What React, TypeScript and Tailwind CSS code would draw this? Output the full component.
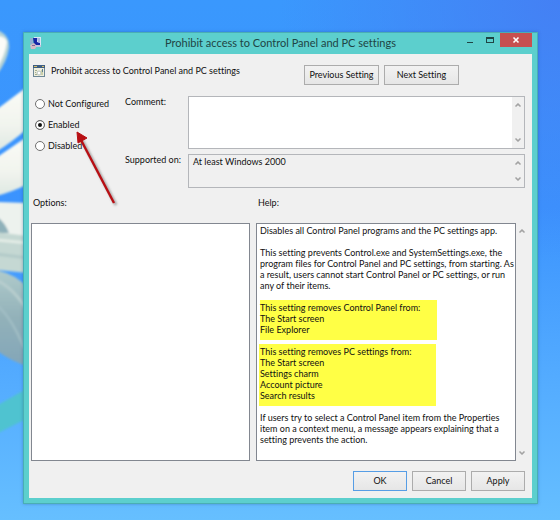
import React, { useState } from "react";
import { ChevronDown, ChevronUp } from "lucide-react";

const STATES = ["Not Configured", "Enabled", "Disabled"];

function Wallpaper() {
    return (
        <svg
            className="absolute inset-0 h-full w-full"
            viewBox="0 0 560 520"
            preserveAspectRatio="none"
            aria-hidden="true"
        >
            <defs>
                <linearGradient id="sky" x1="0" y1="0" x2="0" y2="1">
                    <stop offset="0" stopColor="#3a98fd" />
                    <stop offset="0.4" stopColor="#3b93fe" />
                    <stop offset="0.75" stopColor="#55adff" />
                    <stop offset="1" stopColor="#66bfff" />
                </linearGradient>
                <radialGradient id="corner" cx="1" cy="0" r="0.5">
                    <stop offset="0" stopColor="#4480f4" />
                    <stop offset="1" stopColor="#4480f4" stopOpacity="0" />
                </radialGradient>
                <linearGradient id="petal" x1="0" y1="0" x2="0" y2="1">
                    <stop offset="0" stopColor="#fbfcf7" />
                    <stop offset="0.6" stopColor="#f1f4ee" />
                    <stop offset="1" stopColor="#dde8e2" />
                </linearGradient>
                <linearGradient id="shade" x1="0" y1="0" x2="0" y2="1">
                    <stop offset="0" stopColor="#b0cbcb" />
                    <stop offset="0.5" stopColor="#92b1b9" />
                    <stop offset="1" stopColor="#83a6b8" />
                </linearGradient>
                <filter id="soft">
                    <feGaussianBlur stdDeviation="1" />
                </filter>
            </defs>
            <rect width="560" height="520" fill="url(#sky)" />
            <rect width="560" height="520" fill="url(#corner)" />
            <g filter="url(#soft)">
                <path d="M-4 30 Q10 34 9 48 Q7 62 -4 76Z" fill="#b5d3d6" />
                <path d="M-4 36 Q6 36 7 42 Q5 56 -4 70Z" fill="#fbfcf8" />
                <path d="M-4 110 L28 86 V128 Q12 142 -4 152Z" fill="url(#petal)" />
                <path d="M-4 158 L28 136 V184 Q12 192 -4 196Z" fill="url(#petal)" />
                <path d="M-4 202 L28 203 V240 L-4 238Z" fill="#edf2ee" />
                <path d="M-4 216 Q5 222 9 233 H-4Z" fill="#8fb1ba" />
                <path d="M-4 232 L28 236 V273 L-4 270Z" fill="#c5d8d3" />
                <path d="M-4 240 L28 243" stroke="#e3ece6" strokeWidth="3" />
                <path d="M-4 254 L28 258" stroke="#b3cbc9" strokeWidth="3" />
                <path d="M-4 270 Q16 274 28 288 V366 Q12 362 -4 350Z" fill="url(#shade)" />
                <path d="M-4 280 Q14 288 28 312" stroke="#b7cdce" strokeWidth="3" fill="none" />
                <path d="M-4 304 Q12 318 24 348" stroke="#a3bfc6" strokeWidth="2" fill="none" />
                <path d="M-4 406 L28 388 V418 L-4 434Z" fill="#50c3d0" />
            </g>
        </svg>
    );
}

function TitleIcon() {
    return (
        <svg className="h-3 w-3" viewBox="0 0 12 12" aria-hidden="true">
            <path d="M4 0h7v8H4z" fill="#dbe4f5" />
            <path d="M3 1h4v4l3 1v2H4z" fill="#1626a6" />
            <path d="M7 1h3v5L8 5z" fill="#a6b4e2" />
            <path d="M0 1h3v6H0z" fill="#8fb0d0" />
            <path d="M0 8l4-2 3 3-2 3H1z" fill="#d5b9c4" />
            <path d="M5 8h6v2H6z" fill="#c3c2dc" />
            <path d="M2 8h3v1H2z" fill="#7c6a96" />
        </svg>
    );
}

function PolicyIcon() {
    return (
        <svg className="h-3 w-3" viewBox="0 0 12 12" aria-hidden="true">
            <path d="M0 0h12v12H0z" fill="#6d8796" />
            <path d="M1 3h10v8H1z" fill="#efeedd" />
            <path d="M0 0h12v3H0z" fill="#3f5e82" />
            <path d="M1 1h3v1H1zM9 1h2v1H9z" fill="#d9c169" />
            <path d="M2 5h2v1H2zM2 7h1v1H2zM2 9h2v1H2z" fill="#a3ad8c" />
            <circle cx="6" cy="8" r="2" fill="#fff" stroke="#b5c0bb" />
            <path d="M8 5h2v5H8z" fill="#c9cfab" />
            <path d="M9 4h1v3H9z" fill="#5f7f94" />
        </svg>
    );
}

function ScrollBar() {
    return (
        <div className="flex w-3 shrink-0 flex-col items-center justify-between bg-[#f0f0f0] py-1 text-[#a3a3a3]">
            <button type="button" aria-label="Scroll up">
                <ChevronUp className="h-2 w-2" strokeWidth={5} />
            </button>
            <button type="button" aria-label="Scroll down">
                <ChevronDown className="h-2 w-2" strokeWidth={5} />
            </button>
        </div>
    );
}

function DialogButton({
    className,
    children,
}: {
    className: string;
    children: React.ReactNode;
}) {
    return (
        <button
            type="button"
            className={`h-5 border bg-linear-to-b from-[#f2f2f2] to-[#e6e6e6] pb-px whitespace-nowrap ${className}`}
        >
            {children}
        </button>
    );
}

export default function App() {
    const [state, setState] = useState("Enabled");
    const [comment, setComment] = useState("");

    return (
        <div className="relative flex min-h-screen overflow-hidden pt-8 pr-[22px] pb-4 pl-[23px] font-[Lato,sans-serif] text-[9px] leading-[11px] text-[#111] [font-variant-ligatures:none]">
            <Wallpaper />

            <main className="relative flex min-w-0 flex-1 flex-col border border-[#4aaeb4] bg-[#5ccfcd] px-[5px] pb-[5px] shadow-[0_0_3px_rgba(20,60,120,0.35)]">
                <header className="flex h-[21px] items-start">
                    <div className="flex w-[72px] items-center pt-1 pl-px">
                        <TitleIcon />
                    </div>
                    <h1 className="flex-1 pt-[3px] text-center text-[11px] leading-[14px] text-[#1f4444]">
                        Prohibit access to Control Panel and PC settings
                    </h1>
                    <div className="flex text-[#1f4444]">
                        <button
                            type="button"
                            aria-label="Minimize"
                            className="flex h-[14px] w-5 items-center justify-center"
                        >
                            <svg className="h-2 w-2" viewBox="0 0 8 8">
                                <path d="M1 6h6v1H1z" fill="currentColor" />
                            </svg>
                        </button>
                        <button
                            type="button"
                            aria-label="Maximize"
                            className="flex h-[14px] w-5 items-center justify-center"
                        >
                            <svg className="h-2 w-2" viewBox="0 0 8 8">
                                <path
                                    d="M0 1h8v6H0zM1 3v3h6V3z"
                                    fill="currentColor"
                                    fillRule="evenodd"
                                />
                            </svg>
                        </button>
                        <button
                            type="button"
                            aria-label="Close"
                            className="flex h-[14px] w-8 items-center justify-center bg-[#c75050] text-white"
                        >
                            <svg className="h-2 w-2" viewBox="0 0 8 8">
                                <path
                                    d="M1.5 1.5l5 5M6.5 1.5l-5 5"
                                    stroke="currentColor"
                                    strokeWidth="1.6"
                                />
                            </svg>
                        </button>
                    </div>
                </header>

                <form
                    className="flex flex-1 flex-col bg-[#f0f0f0] pt-[11px] pb-[7px]"
                    onSubmit={(e) => e.preventDefault()}
                >
                    <div className="flex items-start pr-[73px] pl-1">
                        <PolicyIcon />
                        <h2 className="flex-1 pl-[6px] whitespace-nowrap">
                            Prohibit access to Control Panel and PC settings
                        </h2>
                        <div className="flex gap-[5px]">
                            <DialogButton className="w-[75px] border-[#acacac]">
                                Previous Setting
                            </DialogButton>
                            <DialogButton className="w-[75px] border-[#acacac]">
                                Next Setting
                            </DialogButton>
                        </div>
                    </div>

                    <div className="mt-[11px] flex pr-[7px] pl-[6px]">
                        <fieldset className="relative flex w-[90px] flex-col gap-[10px] pt-[2px]">
                            {STATES.map((name) => (
                                <label
                                    key={name}
                                    className="flex h-[11px] items-center gap-[3px] whitespace-nowrap"
                                >
                                    <input
                                        type="radio"
                                        name="state"
                                        checked={state === name}
                                        onChange={() => setState(name)}
                                        className="h-[10px] w-[10px] appearance-none rounded-full border border-[#707070] bg-white checked:bg-[#111] checked:shadow-[inset_0_0_0_2px_white]"
                                    />
                                    {name}
                                </label>
                            ))}
                            <svg
                                className="pointer-events-none absolute top-[34px] left-[38px] h-[78px] w-[48px]"
                                viewBox="0 0 48 78"
                                aria-hidden="true"
                            >
                                <defs>
                                    <filter id="drop">
                                        <feGaussianBlur stdDeviation="1" />
                                    </filter>
                                </defs>
                                <path
                                    d="M9 10L43 75"
                                    stroke="#777"
                                    strokeOpacity="0.6"
                                    strokeWidth="3"
                                    filter="url(#drop)"
                                />
                                <path d="M8 10L41 73" stroke="#b80f14" strokeWidth="2.4" />
                                <path d="M4 2L14 8L5 13Z" fill="#b80f14" stroke="#b80f14" />
                            </svg>
                        </fieldset>

                        <div className="flex min-w-0 flex-1 flex-col gap-[5px]">
                            <div className="flex">
                                <label htmlFor="comment" className="w-[63px]">
                                    Comment:
                                </label>
                                <div className="flex h-[53px] min-w-0 flex-1 border border-[#b4b6ba] bg-white">
                                    <textarea
                                        id="comment"
                                        value={comment}
                                        onChange={(e) => setComment(e.target.value)}
                                        className="min-w-0 flex-1 resize-none px-1 outline-none"
                                    />
                                    <ScrollBar />
                                </div>
                            </div>
                            <div className="flex">
                                <label htmlFor="supported" className="w-[63px] whitespace-nowrap">
                                    Supported on:
                                </label>
                                <div className="flex h-[34px] min-w-0 flex-1 border border-[#b4b6ba]">
                                    <textarea
                                        id="supported"
                                        readOnly
                                        value="At least Windows 2000"
                                        className="min-w-0 flex-1 resize-none px-1 py-px outline-none"
                                    />
                                    <ScrollBar />
                                </div>
                            </div>
                        </div>
                    </div>

                    <div className="mt-[9px] flex h-[26px] pl-1">
                        <h3 className="w-[225px]">Options:</h3>
                        <h3>Help:</h3>
                    </div>

                    <div className="flex flex-1 pr-1 pl-[2px]">
                        <div className="mr-[6px] w-[219px] border border-[#828790] bg-white" />
                        <div className="min-w-0 flex-1 border border-[#828790] bg-white pt-px pl-[2px] whitespace-nowrap">
                            <p className="pl-px">
                                Disables all Control Panel programs and the PC settings app.
                            </p>
                            <p className="mt-[11px] pl-px">
                                This setting prevents Control.exe and SystemSettings.exe, the
                                <br />
                                program files for Control Panel and PC settings, from starting. As
                                <br />
                                a result, users cannot start Control Panel or PC settings, or run
                                <br />
                                any of their items.
                            </p>
                            <p className="mt-[9px] ml-px w-[177px] bg-[#ffff45] pt-[2px] pb-[5px]">
                                This setting removes Control Panel from:
                                <br />
                                The Start screen
                                <br />
                                File Explorer
                            </p>
                            <p className="mt-1 w-[177px] bg-[#ffff45] pt-[2px] pb-[5px] pl-px">
                                This setting removes PC settings from:
                                <br />
                                The Start screen
                                <br />
                                Settings charm
                                <br />
                                Account picture
                                <br />
                                Search results
                            </p>
                            <p className="mt-[6px] pl-px">
                                If users try to select a Control Panel item from the Properties
                                <br />
                                item on a context menu, a message appears explaining that a
                                <br />
                                setting prevents the action.
                            </p>
                        </div>
                        <ScrollBar />
                    </div>

                    <footer className="mt-[10px] flex justify-end gap-[5px] pr-[7px]">
                        <DialogButton className="w-[54px] border-[#569de5]">OK</DialogButton>
                        <DialogButton className="w-[54px] border-[#acacac]">Cancel</DialogButton>
                        <DialogButton className="w-[54px] border-[#acacac]">Apply</DialogButton>
                    </footer>
                </form>
            </main>
        </div>
    );
}
